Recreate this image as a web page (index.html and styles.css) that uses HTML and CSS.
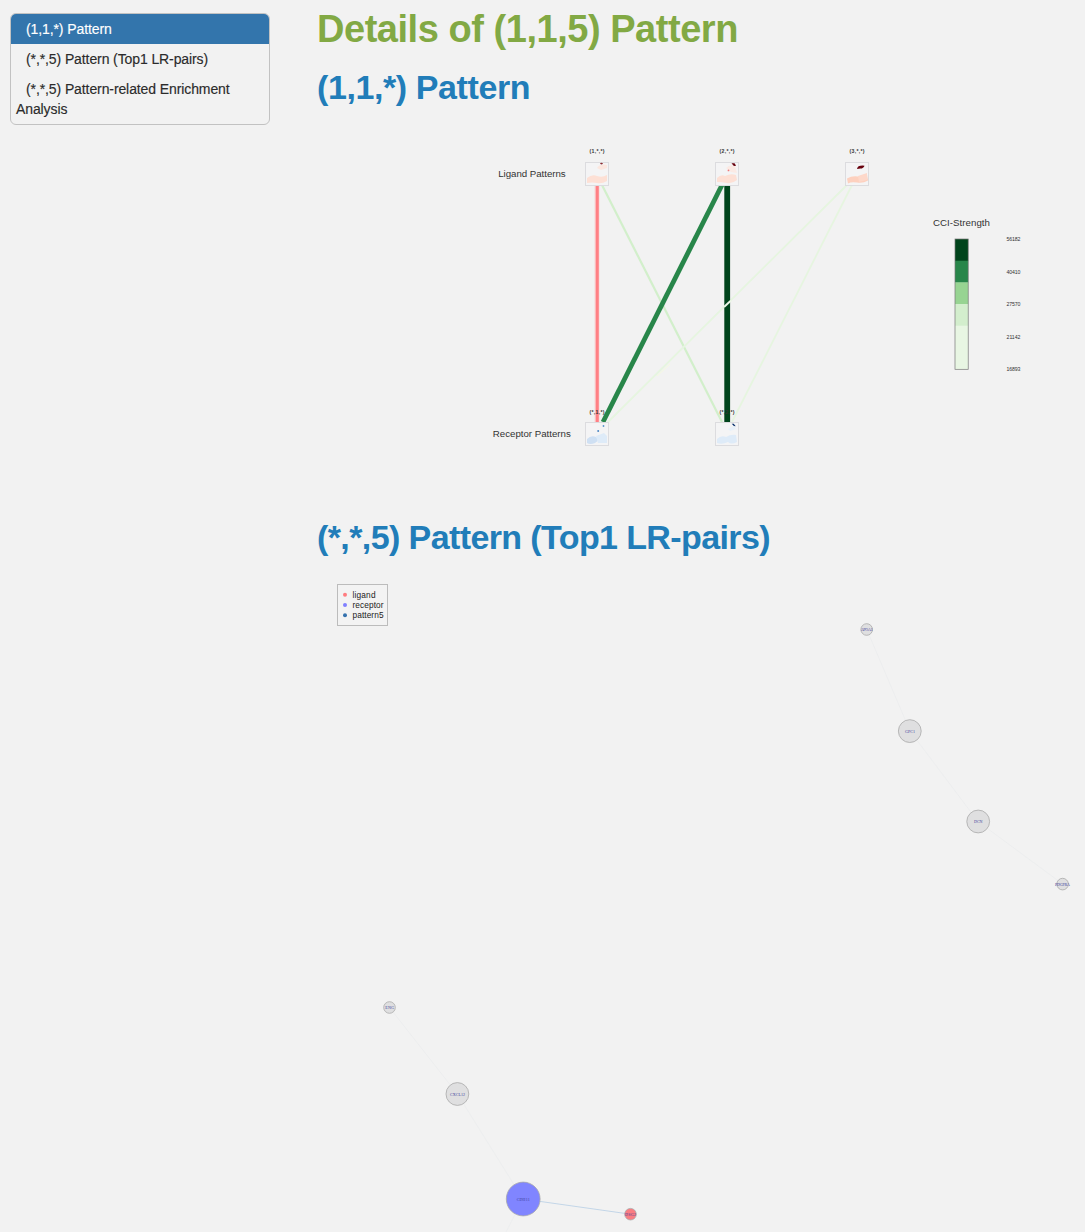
FILE: index.html
```html
<!DOCTYPE html>
<html lang="en">
<head>
<meta charset="utf-8">
<title>Details of (1,1,5) Pattern</title>
<link rel="stylesheet" href="styles.css">
</head>
<body>
<div class="page">
  <aside class="sidebar">
    <nav class="toc">
      <a class="toc-item active">(1,1,*) Pattern</a>
      <a class="toc-item">(*,*,5) Pattern (Top1 LR-pairs)</a>
      <a class="toc-item">(*,*,5) Pattern-related Enrichment Analysis</a>
    </nav>
  </aside>
  <main class="content">
    <h1 class="title">Details of (1,1,5) Pattern</h1>
    <section>
      <h2 class="heading first">(1,1,*) Pattern</h2>
      <svg class="flow" viewBox="317 120 768 380">
        <g fill="none">
          <path d="M597 185V422" stroke="#fbc3c3" stroke-width="4.6"/>
          <path d="M597.3 185V422" stroke="#ff7f84" stroke-width="2.8"/>
          <path d="M602 185L722 422" stroke="#d2efcb" stroke-width="2.2"/>
          <path d="M722 185L603 422" stroke="#28864a" stroke-width="4.8"/>
          <path d="M847 185L608 422" stroke="#e6f5e0" stroke-width="1.8"/>
          <path d="M852 185L732 422" stroke="#e6f5e0" stroke-width="1.8"/>
          <path d="M727.2 185V422" stroke="#00441b" stroke-width="5.8"/>
          <path d="M724 307L731 300.5" stroke="#edf7e8" stroke-width="2"/>
          <path d="M657 376L670 364" stroke="#f5fbdf" stroke-width="1"/>
        </g>
        <g fill="#f4f4f5" stroke="#dcdcdf">
          <rect x="585.5" y="162.5" width="23" height="23"/>
          <rect x="715.5" y="162.5" width="23" height="23"/>
          <rect x="845.5" y="162.5" width="23" height="23"/>
          <rect x="585.5" y="422.5" width="23" height="23"/>
          <rect x="715.5" y="422.5" width="23" height="23"/>
        </g>
        <g>
          <path fill="#fde0d5" d="M587 178q5-4 10-2t10-1v6q-5 3-10 2t-10 0z"/>
          <path fill="#fce7df" d="M597 168q3-5 10-3v3l-6 2z"/>
          <ellipse cx="601.5" cy="163.6" rx="1.4" ry=".8" fill="#8b2c31"/>
        </g>
        <g>
          <path fill="#fde0d5" d="M717 178q4-4 8-2 6-3 11-1l1 5q-5 4-10 3t-10-1z"/>
          <path fill="#fbeae4" d="M726 168q4-4 9-2l2 7-6-1z"/>
          <path fill="#67000d" d="M731.5 163.2l3 0 1.6 2.5-2.2 .2z"/>
          <circle cx="728.5" cy="170.4" r=".9" fill="#ee797b"/>
        </g>
        <g>
          <path fill="#fdd0be" d="M847 178.500q5-3 11-2l9-2 1 6q-5 3-11 2t-9 1z"/>
          <path fill="#fdd8ca" d="M858 176l9-3v7l-8 2z"/>
          <path fill="#67000d" d="M857 169q.5-4 7.500-3.300-1 2.800-4 2.800z"/>
        </g>
        <g>
          <path fill="#cfe0f3" d="M587 439q4-4 9-2t-1 6q-5 2-8 0z"/>
          <path fill="#deebf8" d="M596 436l8-3 3 3v7h-9z"/>
          <circle cx="598.2" cy="431" r="1" fill="#4d86c2"/>
          <circle cx="603.5" cy="426" r=".9" fill="#5a93cc"/>
        </g>
        <g>
          <path fill="#deebf8" d="M717 439q4-4 9-2 5-3 10-2l1 7q-6 3-9 0-6 3-11 1z"/>
          <path fill="#e8f1fa" d="M728 429l6-3 2 3-6 2z"/>
          <path fill="#08306b" d="M731.7 423.8l2 0 2 2.4-1.8-.2z"/>
        </g>
        <g class="tiny bold">
          <text x="589.5" y="153" textLength="15">(1,*,*)</text>
          <text x="719.5" y="153" textLength="15">(2,*,*)</text>
          <text x="849.5" y="153" textLength="15">(3,*,*)</text>
          <text x="589.5" y="414" textLength="15">(*,1,*)</text>
          <text x="719.5" y="414" textLength="15">(*,2,*)</text>
        </g>
        <g class="label">
          <text x="498.2" y="176.7" textLength="67.5">Ligand Patterns</text>
          <text x="492.8" y="436.7" textLength="78">Receptor Patterns</text>
          <text x="933" y="225.8" textLength="57">CCI-Strength</text>
        </g>
        <rect x="955" y="239" width="13.2" height="22" fill="#00441b"/>
        <rect x="955" y="260.7" width="13.2" height="22" fill="#28864a"/>
        <rect x="955" y="282.4" width="13.2" height="22" fill="#97d492"/>
        <rect x="955" y="304" width="13.2" height="22" fill="#d3eecd"/>
        <rect x="955" y="325.7" width="13.2" height="43.6" fill="#e8f6e3"/>
        <rect x="955" y="239" width="13.2" height="130.3" fill="none" stroke="#777" stroke-width=".7"/>
        <g class="tiny">
          <text x="1006.5" y="240.8" textLength="14">56182</text>
          <text x="1006.5" y="273.7" textLength="14">40410</text>
          <text x="1006.5" y="306.2" textLength="14">27570</text>
          <text x="1006.5" y="338.8" textLength="14">21142</text>
          <text x="1006.5" y="371.3" textLength="14">16893</text>
        </g>
      </svg>
    </section>
    <section>
      <h2 class="heading second">(*,*,5) Pattern (Top1 LR-pairs)</h2>
      <svg class="network" viewBox="317 570 768 662">
        <rect x="337.5" y="584.5" width="50" height="41" fill="#f3f3f3" stroke="#bcbcbc"/>
        <circle cx="345" cy="594.7" r="2" fill="#ff7c80"/>
        <circle cx="345" cy="605" r="2" fill="#8080ff"/>
        <circle cx="345" cy="615.2" r="2" fill="#3572ae"/>
        <g class="key">
          <text x="352.5" y="598" textLength="23">ligand</text>
          <text x="352.5" y="608.2" textLength="31">receptor</text>
          <text x="352.5" y="618.4" textLength="31">pattern5</text>
        </g>
        <path d="M867 630L910 731L978 821.5L1062.6 884M389.5 1007.5L457.4 1094L523 1199L506 1232" fill="none" stroke="#ebeced" stroke-width=".8"/>
        <path d="M523 1199L630.5 1214.2" stroke="#bdd3e6" stroke-width=".9"/>
        <g fill="#dfdfe0" stroke="#aaa" stroke-width=".8">
          <circle cx="866.7" cy="629.5" r="5.8"/>
          <circle cx="909.8" cy="731.1" r="11.4"/>
          <circle cx="978.2" cy="821.5" r="11.4"/>
          <circle cx="1062.6" cy="884.1" r="5.8"/>
          <circle cx="389.5" cy="1007.5" r="5.8"/>
          <circle cx="457.4" cy="1094" r="11.4"/>
          <circle cx="523.2" cy="1199" r="16.9" fill="#8085ff"/>
          <circle cx="630.5" cy="1214.2" r="5.8" fill="#fa7d82"/>
        </g>
        <g class="gene">
          <text x="860.7" y="630.9" textLength="12">APOA1</text>
          <text x="905" y="732.5" textLength="10">GPC1</text>
          <text x="974" y="823" textLength="8.5">DCN</text>
          <text x="1055" y="885.6" textLength="15">PDGFRA</text>
          <text x="385.3" y="1009" textLength="8.5">ENG</text>
          <text x="450" y="1095.5" textLength="15">CXCL12</text>
          <text x="516.7" y="1200.5" textLength="13">CDH11</text>
          <text x="625" y="1215.7" textLength="11">DSG2</text>
        </g>
      </svg>
    </section>
  </main>
</div>
</body>
</html>
```
FILE: styles.css
```css
* { box-sizing: border-box; }
body {
  margin: 0;
  background: #f2f2f2;
  color: #333;
  font: 14px/20px "Liberation Sans", Arial, sans-serif;
}
.page {
  display: grid;
  grid-template-columns: 317px 768px;
  height: 1232px;
  overflow: hidden;
}
.sidebar { padding: 13px 47px 0 10px; }
.toc {
  border: 1px solid #c2c2c2;
  border-radius: 6px;
  overflow: hidden;
}
.toc-item {
  display: block;
  padding: 5px;
  text-indent: 10px;
  letter-spacing: -.1px;
  color: #2b2b2b;
  -webkit-text-stroke: .15px currentColor;
}
.toc-item.active { background: #3375ac; color: #fff; }
.title, .heading {
  margin: 0;
  font-weight: 700;
  white-space: nowrap;
}
.title {
  padding-top: 6px;
  height: 64px;
  font-size: 38px;
  line-height: 46px;
  letter-spacing: -.46px;
  color: #82a944;
}
.heading {
  height: 70px;
  padding-top: 17px;
  font-size: 34px;
  line-height: 40px;
  color: #217db9;
}
.heading.first { height: 56px; padding-top: 3px; letter-spacing: -.4px; }
.heading.second { letter-spacing: -.6px; }
.flow, .network { display: block; width: 768px; }
.flow { height: 380px; }
.network { height: 662px; }
.label { font-size: 9.7px; fill: #333; }
.tiny { font-size: 5.2px; fill: #333; }
.bold { font-weight: 700; }
.key { font-size: 8.3px; fill: #222; }
.gene { font-family: "Liberation Serif", serif; font-size: 4px; fill: #3e3e9b; }
```
